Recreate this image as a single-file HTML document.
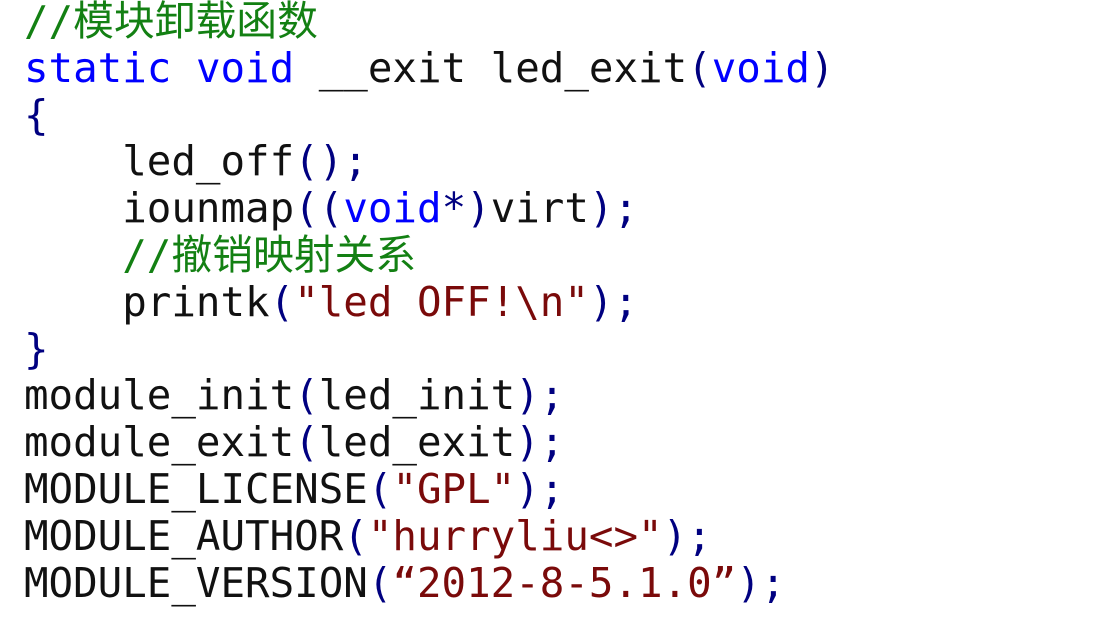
<!DOCTYPE html>
<html><head><meta charset="utf-8"><style>
html,body{margin:0;padding:0;background:#fff;width:1104px;height:618px;overflow:hidden}
pre{margin:0;position:absolute;left:24px;top:-2px;font-family:"DejaVu Sans Mono","Noto Sans CJK SC",monospace;font-size:40.8px;line-height:46.8px;color:#111}
.c{color:#138013}.k{color:#0000ff}.p{color:#000080}.s{color:#7a0a0a}
</style></head><body><pre><span class="c">//模块卸载函数</span>
<span class="k">static</span> <span class="k">void</span> __exit led_exit<span class="p">(</span><span class="k">void</span><span class="p">)</span>
<span class="p">{</span>
    led_off<span class="p">();</span>
    iounmap<span class="p">((</span><span class="k">void</span><span class="p">*)</span>virt<span class="p">);</span>
    <span class="c">//撤销映射关系</span>
    printk<span class="p">(</span><span class="s">"led OFF!\n"</span><span class="p">);</span>
<span class="p">}</span>
module_init<span class="p">(</span>led_init<span class="p">);</span>
module_exit<span class="p">(</span>led_exit<span class="p">);</span>
MODULE_LICENSE<span class="p">(</span><span class="s">"GPL"</span><span class="p">);</span>
MODULE_AUTHOR<span class="p">(</span><span class="s">"hurryliu&lt;&gt;"</span><span class="p">);</span>
MODULE_VERSION<span class="p">(</span><span class="s">“2012-8-5.1.0”</span><span class="p">);</span></pre></body></html>
